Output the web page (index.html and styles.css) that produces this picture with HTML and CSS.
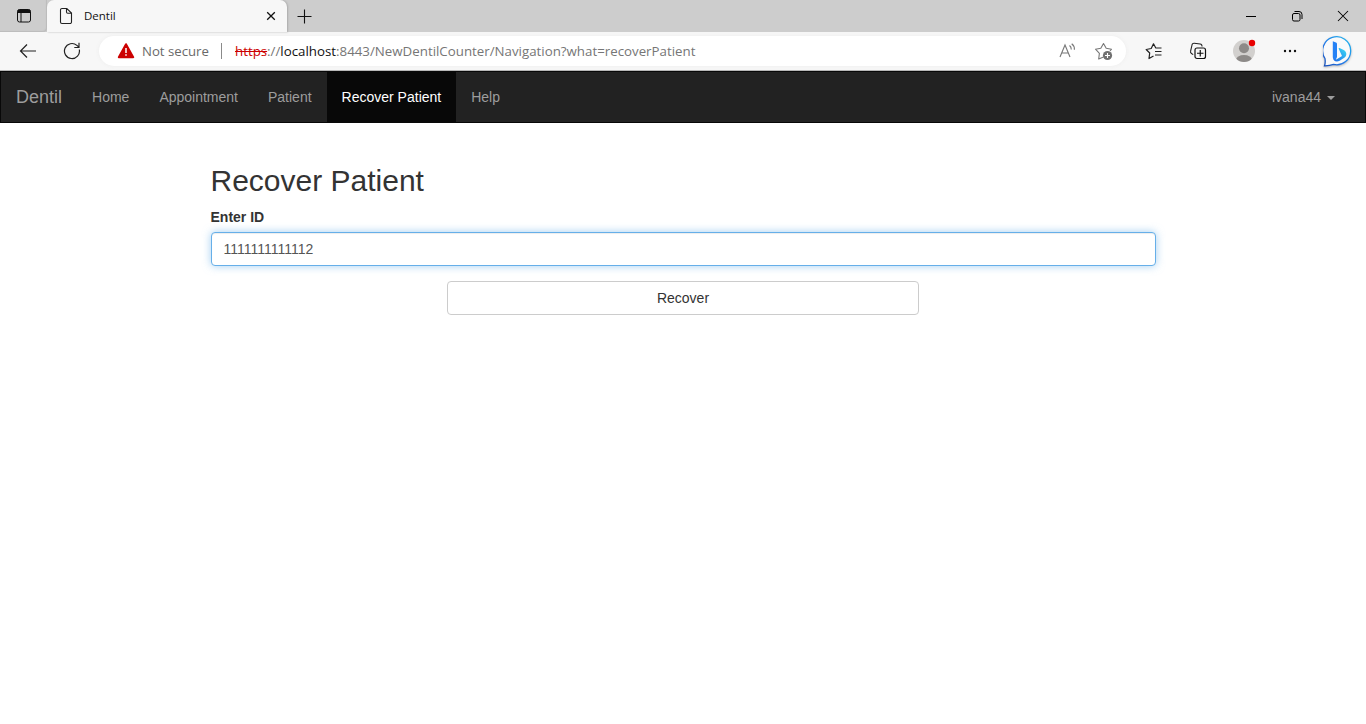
FILE: index.html
```html
<!DOCTYPE html>
<html lang="en">
<head>
<meta charset="utf-8">
<title>Dentil</title>
<link rel="stylesheet" href="styles.css">
</head>
<body>
<header class="browser">
  <div class="tabstrip">
    <div class="workspace">
      <svg width="16" height="16" viewBox="0 0 16 16"><rect x="1.5" y="1.5" width="13" height="12.5" rx="2" fill="none" stroke="#111"/><path d="M1.5 5V3.5a2 2 0 0 1 2-2h9a2 2 0 0 1 2 2V5z" fill="#111"/><path d="M5 5v9" stroke="#111"/></svg>
    </div>
    <div class="tab">
      <svg class="page-icon" width="14" height="18" viewBox="0 0 14 18"><path d="M3 1.5h4.8L12.5 6v9a1.5 1.5 0 0 1-1.5 1.5H3A1.5 1.5 0 0 1 1.500 15V3A1.500 1.500 0 0 1 3 1.500zM7.500 1.500V5A1.200 1.200 0 0 0 8.700 6.200h3.800" fill="none" stroke="#222" stroke-width="1.100"/></svg>
      <span class="tab-title">Dentil</span>
      <svg class="tab-close" width="10" height="10" viewBox="0 0 10 10"><path d="M1.200 1.200l7.600 7.600M8.800 1.200L1.200 8.800" stroke="#111" stroke-width="1.300"/></svg>
    </div>
    <svg class="new-tab" width="15" height="15" viewBox="0 0 15 15"><path d="M7.500 .5v14M.5 7.500h14" stroke="#111" stroke-width="1.100"/></svg>
    <div class="window-controls">
      <svg width="12" height="12" viewBox="0 0 12 12"><path d="M1 6.500h10" stroke="#000"/></svg>
      <svg width="12" height="12" viewBox="0 0 12 12"><rect x="1.500" y="3.500" width="7.500" height="7.500" rx="1.500" fill="none" stroke="#000"/><path d="M3.500 1.500H8a3 3 0 0 1 3 3V9" fill="none" stroke="#000"/></svg>
      <svg width="12" height="12" viewBox="0 0 12 12"><path d="M1 1l10 10M11 1L1 11" stroke="#000" stroke-width="1.050"/></svg>
    </div>
  </div>
  <div class="toolbar">
    <svg class="back" width="18" height="16" viewBox="0 0 18 16"><path d="M17 8H1.500M8 1.500L1.500 8L8 14.500" fill="none" stroke="#222" stroke-width="1.200"/></svg>
    <svg class="reload" width="18" height="18" viewBox="0 0 18 18"><path d="M16.300 7.500a7.500 7.500 0 1 1-2.400-4.100L15.800 5M16 .8V5.500h-4.700" fill="none" stroke="#222" stroke-width="1.200"/></svg>
    <div class="address">
      <svg class="warning" width="18" height="16" viewBox="0 0 18 16"><path d="M9 1.200L16.200 14.200H1.800z" fill="#c00" stroke="#c00" stroke-width="2" stroke-linejoin="round"/><path d="M9 5v5M9 11.200v1.600" stroke="#fff" stroke-width="1.500"/></svg>
      <span class="not-secure">Not secure</span>
      <span class="divider"></span>
      <span class="url"><s>https</s>://<b>localhost</b>:8443/NewDentilCounter/Navigation?what=recoverPatient</span>
      <svg class="read-aloud" width="18" height="16" viewBox="0 0 18 16"><path d="M1 14L6 2l5 12M2.800 10h6.400M10.500 2.500q1.800 1.300 1.800 4M12.700 .8q3 2.300 2.700 5.900" fill="none" stroke="#777" stroke-width="1.100"/></svg>
      <svg class="favorite" width="20" height="20" viewBox="0 0 20 20"><path d="M9.500 16L4.700 18l.7-5.700L1.500 8.200l5.300-1L9.500 2.500l2.700 4.700 5.300 1-1.500 1.800" fill="none" stroke="#777" stroke-width="1.100" stroke-linejoin="round"/><circle cx="13.500" cy="14.500" r="4.600" fill="#707070"/><path d="M13.500 12v5M11 14.500h5" stroke="#fff" stroke-width="1.100"/></svg>
    </div>
    <svg class="favorites" width="18" height="18" viewBox="0 0 18 18"><path d="M8.500 14L4 16.500l.7-5.500L1.200 7.500l5-1L8.500 1.800l2.300 4.200h5.700M10 9.500h6.500M10 13h6.500" fill="none" stroke="#222" stroke-width="1.200" stroke-linejoin="round"/></svg>
    <svg class="collections" width="18" height="18" viewBox="0 0 18 18"><path d="M4.200 12.600L2.500 11.500A2 2 0 0 1 1.600 9.200L3 3A2 2 0 0 1 5.200 1.200l6 .8a2 2 0 0 1 1.700 2.500" fill="none" stroke="#222" stroke-width="1.100"/><rect x="6" y="6" width="10.500" height="10.500" rx="2" fill="#f7f7f7" stroke="#111" stroke-width="1.200"/><path d="M11.250 8v6.500M8 11.250H14.500" stroke="#111" stroke-width="1.200"/></svg>
    <svg class="profile" width="24" height="24" viewBox="0 0 24 24"><defs><clipPath id="avatar"><circle cx="12" cy="12" r="11"/></clipPath></defs><circle cx="12" cy="12" r="11" fill="#d2d0ce"/><g clip-path="url(#avatar)" fill="#8d8a88"><circle cx="12" cy="9.300" r="5"/><ellipse cx="12" cy="21" rx="8" ry="5"/></g><circle cx="20" cy="4" r="3.200" fill="#e80000"/></svg>
    <svg class="more" width="14" height="4" viewBox="0 0 14 4"><g fill="#111"><circle cx="2" cy="2" r="1.200"/><circle cx="7" cy="2" r="1.200"/><circle cx="12" cy="2" r="1.200"/></g></svg>
    <svg class="bing" width="32" height="32" viewBox="0 0 32 32"><defs><linearGradient id="ring" x1="1" y1="0" x2="0" y2="1"><stop stop-color="#20b8ee"/><stop offset=".6" stop-color="#2479e8"/><stop offset="1" stop-color="#174bb5"/></linearGradient><linearGradient id="bowl" x1="1" y1="0" x2="0" y2="1"><stop stop-color="#3ce0f5"/><stop offset="1" stop-color="#1c62e8"/></linearGradient></defs><path d="M1.500 29.800Q2.600 27 2 22.500A14 14 0 1 1 10.500 28.400Q6.500 29.900 1.500 29.800z" fill="#fafafa" stroke="url(#ring)" stroke-width="1.300"/><path d="M9.800 5.200l3.200 1.200q1 .4 1 1.500V21l-1.500 3.500q-2.700-.9-2.700-4z" fill="#2682f5"/><path d="M9.800 20.500q.4 3.700 4 2.700L19 20l-3.300-7.200q-.3-1 .8-.7l3.700 1.600c4 1.800 4.100 6.300.7 8.400l-4.200 2.700c-3.800 2.200-6.900-.3-6.900-4.300z" fill="url(#bowl)"/></svg>
  </div>
</header>

<nav class="navbar">
  <a class="brand">Dentil</a>
  <a class="nav-link">Home</a>
  <a class="nav-link">Appointment</a>
  <a class="nav-link">Patient</a>
  <a class="nav-link active">Recover Patient</a>
  <a class="nav-link">Help</a>
  <a class="nav-link user">ivana44<span class="caret"></span></a>
</nav>

<main class="content">
  <h2 class="heading">Recover Patient</h2>
  <label class="label" for="patient-id">Enter ID</label>
  <input class="input" id="patient-id" type="text" value="1111111111112">
  <button class="button" type="button">Recover</button>
</main>
</body>
</html>
```

FILE: styles.css
```css
* { box-sizing: border-box; }
body {
  margin: 0;
  height: 724px;
  overflow: hidden;
  background: #fff;
  color: #333;
  font: 14px/20px "Liberation Sans", Arial, sans-serif;
}
svg { display: block; flex: none; }

.browser { font-family: "Open Sans", "Noto Sans", sans-serif; }
.tabstrip { display: flex; align-items: center; height: 32px; background: #cdcdcd; }
.workspace {
  display: flex;
  justify-content: center;
  align-items: center;
  width: 47px;
  height: 32px;
  border-bottom-right-radius: 4px;
  box-shadow: inset -1px -1px 1px #bcbcbc;
}
.tab {
  display: flex;
  align-items: center;
  width: 240px;
  height: 32px;
  padding: 0 11px 0 12px;
  background: #f7f7f7;
  border-radius: 7px 7px 0 0;
  box-shadow: 1px 0 2px #aaa;
}
.tab-title { margin-left: 11px; color: #111; font-size: 11.5px; }
.tab-close { margin-left: auto; }
.new-tab { margin-left: 10px; }
.window-controls { display: flex; gap: 34px; margin-left: auto; padding-right: 17px; }
.toolbar {
  display: flex;
  align-items: center;
  height: 39px;
  background: #f7f7f7;
  border-bottom: 1px solid #b8b8b8;
}
.back { margin-left: 19px; }
.reload { margin-left: 26px; }
.address {
  display: flex;
  align-items: center;
  width: 1027px;
  height: 30px;
  margin-left: 18px;
  padding: 0 12px 0 18px;
  border-radius: 15px;
  background: #fff;
  box-shadow: 0 0 4px #ededed;
}
.not-secure { width: 68px; margin-left: 7px; color: #696969; font-size: 13.2px; white-space: nowrap; }
.divider { width: 1px; height: 16px; margin-left: 11px; background: #8a8a8a; }
.url { margin-left: 13px; color: #767676; font-size: 13.3px; white-space: nowrap; }
.url s { color: #c00; }
.url b { color: #111; font-weight: 400; }
.read-aloud { margin-left: auto; }
.favorite { margin-left: 17px; }
.favorites { margin-left: 19px; }
.collections { margin-left: 26px; }
.profile { margin-left: 25px; }
.more { margin-left: 27px; }
.bing { margin: 2px 0 0 26px; filter: drop-shadow(0 1px 1px rgba(0, 0, 0, .25)); }

.navbar {
  display: flex;
  height: 52px;
  border: 1px solid #080808;
  background: #222;
  color: #9d9d9d;
}
.brand { padding: 15px; font-size: 18px; }
.nav-link { padding: 15px; }
.active { background: #080808; color: #fff; }
.user { margin-left: auto; margin-right: 15px; }
.caret {
  display: inline-block;
  margin-left: 6px;
  border: 4px solid transparent;
  border-top-color: #9d9d9d;
  border-bottom: 0;
  vertical-align: middle;
}

.content { display: flex; flex-direction: column; width: 945px; margin: 41px auto 0; }
.heading { margin: 0 0 10px; font-size: 30px; font-weight: 400; line-height: 33px; }
.label { margin-bottom: 5px; font-weight: 700; }
.input {
  width: 100%;
  height: 34px;
  padding: 6px 12px;
  border: 1px solid #66afe9;
  border-radius: 4px;
  outline: 0;
  background: #fff;
  box-shadow: inset 0 1px 1px rgba(0, 0, 0, .075), 0 0 8px rgba(102, 175, 233, .6);
  color: #555;
  font: inherit;
}
.button {
  align-self: center;
  width: 472px;
  height: 34px;
  margin-top: 15px;
  padding: 6px 12px;
  border: 1px solid #ccc;
  border-radius: 4px;
  background: #fff;
  color: #333;
  font: inherit;
}
```
